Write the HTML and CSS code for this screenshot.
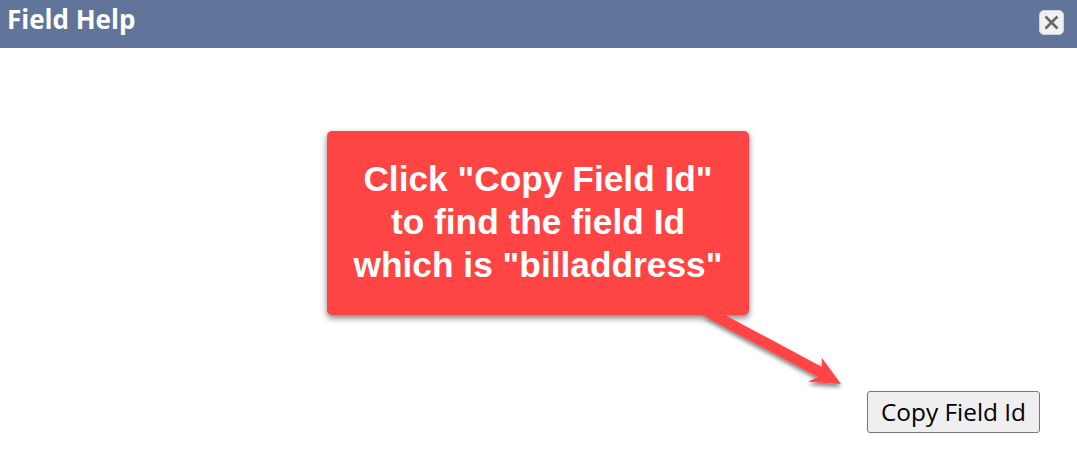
FILE: index.html
```html
<!DOCTYPE html>
<html lang="en">
<head>
    <meta charset="UTF-8">
    <title>Field Help</title>
    <link rel="stylesheet" href="styles.css">
</head>
<body>
    <div class="header">
        <h1>Field Help</h1>
        <button class="close-btn" type="button" aria-label="Close">
            <svg width="17" height="17" viewBox="0 0 17 17">
                <path d="M2.5 2.5 L14.5 14.5 M14.5 2.5 L2.5 14.5" stroke="#666" stroke-width="2.6" fill="none"/>
            </svg>
        </button>
    </div>

    <div class="content">
        <button class="copy-btn" type="button">Copy Field Id</button>

        <!-- annotation drawn over the dialog -->
        <div class="callout">Click "Copy Field Id"<br>to find the field Id<br>which is "billaddress"</div>
        <svg class="arrow" width="160" height="90" viewBox="0 0 160 90">
            <defs>
                <filter id="arrowShadow" x="-10%" y="-10%" width="120%" height="130%">
                    <feDropShadow dx="0" dy="3" stdDeviation="2" flood-color="#000" flood-opacity="0.5"/>
                </filter>
            </defs>
            <polygon points="12,0 35,0 132,52 131.7,42.7 151,69 118,66.7 128,62" fill="#ff4444" filter="url(#arrowShadow)"/>
        </svg>
    </div>
</body>
</html>
```

FILE: styles.css
```css
* {
    margin: 0;
    padding: 0;
    box-sizing: border-box;
}

body {
    font-family: "Open Sans", sans-serif;
    background: white;
    width: 1077px;
    height: 474px;
    overflow: hidden;
}

.header {
    height: 48px;
    background: #607599;
    display: flex;
    justify-content: space-between;
    align-items: flex-start;
    padding: 4px 13px 0 7px;
}

.header h1 {
    color: white;
    font-size: 26px;
    font-weight: 700;
    line-height: 30px;
}

.close-btn {
    width: 25px;
    height: 25px;
    margin-top: 6px;
    background: #f1f1f1;
    border: 1px solid #d0d4da;
    border-radius: 5px;
    display: flex;
    justify-content: center;
    align-items: center;
}

.content {
    position: relative;
    height: 426px;
    display: flex;
    justify-content: flex-end;
    align-items: flex-start;
    padding: 343px 37px 0 0;
}

.copy-btn {
    width: 173px;
    height: 42px;
    padding-bottom: 2px;
    background: #efefef;
    border: 1px solid #767676;
    border-radius: 3px;
    color: black;
    font-family: "Open Sans", sans-serif;
    font-size: 24.4px;
}

.callout {
    position: absolute;
    left: 327px;
    top: 83px;
    width: 422px;
    height: 184px;
    padding-top: 26px;
    background: #ff4444;
    border-radius: 5px;
    box-shadow: 0 3px 6px rgba(0,0,0,0.5);
    color: white;
    font-family: "Liberation Sans", Arial, sans-serif;
    font-size: 35.3px;
    font-weight: 700;
    line-height: 43px;
    text-align: center;
}

.arrow {
    position: absolute;
    left: 690px;
    top: 267px;
}
```
